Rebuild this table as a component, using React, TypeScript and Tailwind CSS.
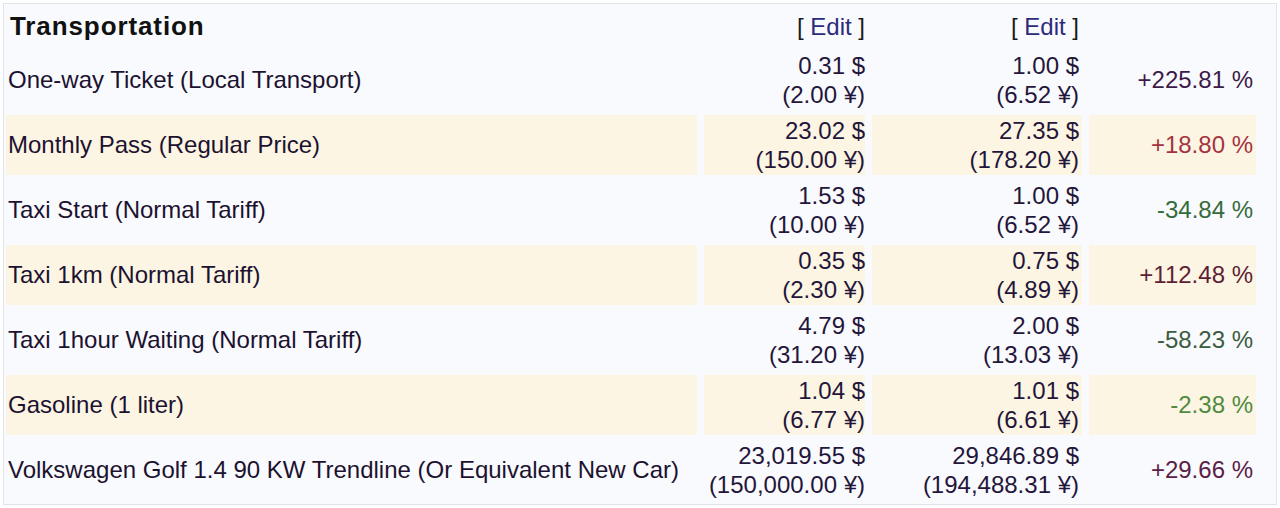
import React from "react";

type Row = {
  label: string;
  a: [string, string];
  b: [string, string];
  pct: string;
  color: string;
};

const rows: Row[] = [
  { label: "One-way Ticket (Local Transport)", a: ["0.31 $", "(2.00 ¥)"], b: ["1.00 $", "(6.52 ¥)"], pct: "+225.81 %", color: "text-[#3d1a4a]" },
  { label: "Monthly Pass (Regular Price)", a: ["23.02 $", "(150.00 ¥)"], b: ["27.35 $", "(178.20 ¥)"], pct: "+18.80 %", color: "text-[#a3333f]" },
  { label: "Taxi Start (Normal Tariff)", a: ["1.53 $", "(10.00 ¥)"], b: ["1.00 $", "(6.52 ¥)"], pct: "-34.84 %", color: "text-[#356b3c]" },
  { label: "Taxi 1km (Normal Tariff)", a: ["0.35 $", "(2.30 ¥)"], b: ["0.75 $", "(4.89 ¥)"], pct: "+112.48 %", color: "text-[#5e1f36]" },
  { label: "Taxi 1hour Waiting (Normal Tariff)", a: ["4.79 $", "(31.20 ¥)"], b: ["2.00 $", "(13.03 ¥)"], pct: "-58.23 %", color: "text-[#3b5c3e]" },
  { label: "Gasoline (1 liter)", a: ["1.04 $", "(6.77 ¥)"], b: ["1.01 $", "(6.61 ¥)"], pct: "-2.38 %", color: "text-[#4f8a3f]" },
  { label: "Volkswagen Golf 1.4 90 KW Trendline (Or Equivalent New Car)", a: ["23,019.55 $", "(150,000.00 ¥)"], b: ["29,846.89 $", "(194,488.31 ¥)"], pct: "+29.66 %", color: "text-[#5a2146]" },
];

const grid = "grid grid-cols-[691px_161px_210px_167px] gap-x-[7px]";

function Edit() {
  return (
    <span className="text-[#1a1a1a]">
      [ <span className="text-[#2d2b7c]">Edit</span> ]
    </span>
  );
}

export default function App() {
  return (
    <div className="w-[1280px] h-[508px] bg-white pt-[3px] pl-[3px] font-['Liberation_Sans',Arial,sans-serif] text-[24px]">
      <div className="w-[1274px] h-[502px] border border-[#e1e3ea] bg-[#f9fafd] pl-[2px] pt-[5px] flex flex-col gap-y-[5px]">
        <div className={`${grid} h-[36px] items-center`}>
          <div className="pl-[4px] font-bold text-[#111111] text-[26px] tracking-[0.9px] leading-[30px] -mt-[2px]">Transportation</div>
          <div className="text-right pr-0"><Edit /></div>
          <div className="text-right pr-[3px]"><Edit /></div>
          <div />
        </div>
        {rows.map((r, i) => {
          const bg = i % 2 === 1 ? "bg-[#fdf5e3]" : "";
          return (
            <div key={i} className={`${grid} h-[60px]`}>
              <div className={`${bg} flex items-center pl-[2px] text-[#1c1230]`}>{r.label}</div>
              <div className={`${bg} flex flex-col justify-center items-end pr-0 leading-[29px] text-[#24163a]`}>
                <span>{r.a[0]}</span>
                <span>{r.a[1]}</span>
              </div>
              <div className={`${bg} flex flex-col justify-center items-end pr-[3px] leading-[29px] text-[#24163a]`}>
                <span>{r.b[0]}</span>
                <span>{r.b[1]}</span>
              </div>
              <div className={`${bg} flex items-center justify-end pr-[3px] ${r.color}`}>{r.pct}</div>
            </div>
          );
        })}
      </div>
    </div>
  );
}
